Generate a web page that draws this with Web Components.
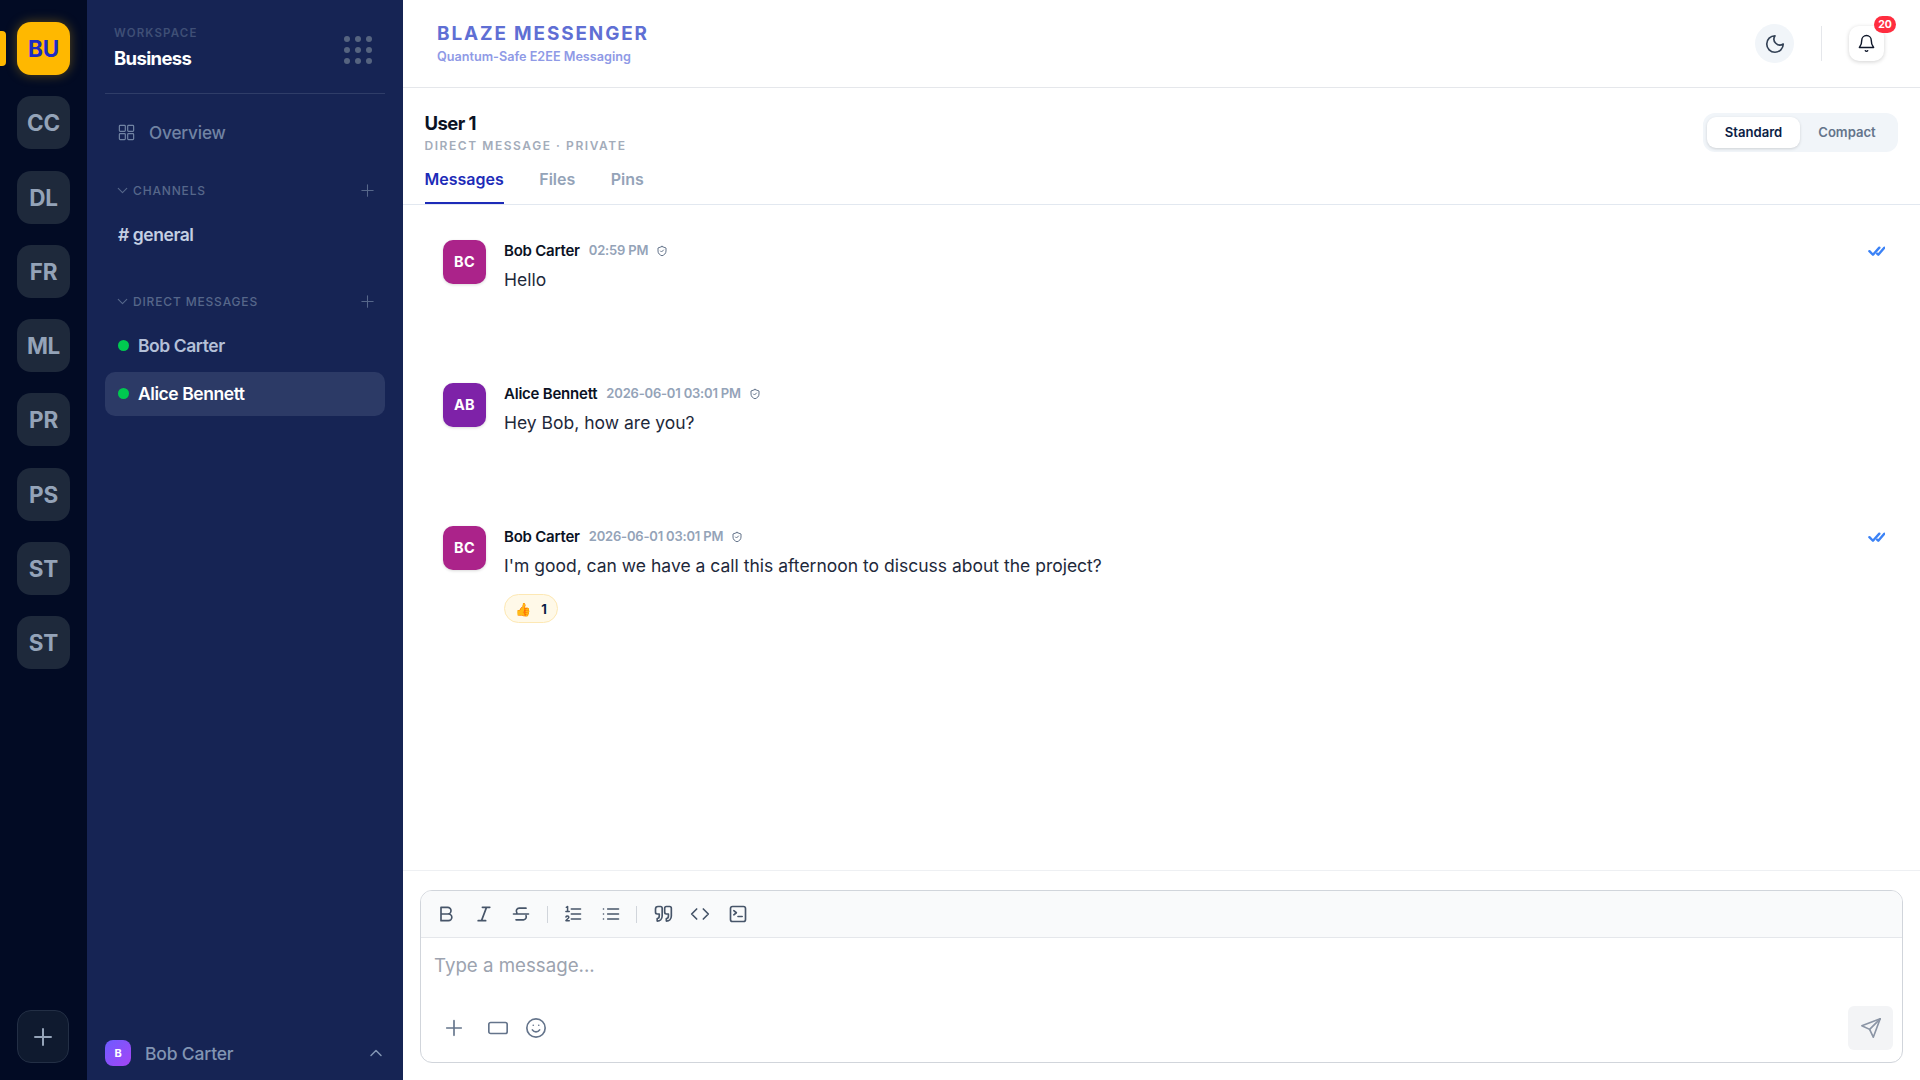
<!DOCTYPE html>
<html lang="en">
<head>
<meta charset="utf-8">
<title>Blaze Messenger</title>
<style>
  html, body { margin: 0; height: 100%; overflow: hidden; }
  body { font-family: "Inter", "Liberation Sans", sans-serif; }
</style>
</head>
<body>
<blaze-app></blaze-app>
<script>
// icon paths, 24x24 stroke icons
const ICONS = {
  grid: '<rect x="3" y="3" width="7.5" height="7.5" rx="1"/><rect x="13.5" y="3" width="7.5" height="7.5" rx="1"/><rect x="3" y="13.5" width="7.5" height="7.5" rx="1"/><rect x="13.5" y="13.5" width="7.5" height="7.5" rx="1"/>',
  plus: '<path d="M12 4v16M4 12h16"/>',
  down: '<path d="M6 9l6 6 6-6"/>',
  up: '<path d="M6 15l6-6 6 6"/>',
  moon: '<path d="M12 3a6.5 6.5 0 0 0 9 9 9 9 0 1 1-9-9Z"/>',
  bell: '<path d="M6 8a6 6 0 0 1 12 0c0 7 3 8 3 9H3c0-1 3-2 3-9"/><path d="M10.5 21a1.7 1.7 0 0 0 3 0"/>',
  shield: '<path d="M12 3l8 3v6c0 5-3.5 8-8 9.5C7.5 20 4 17 4 12V6l8-3Z"/><path d="M9 12l2 2 4-4"/>',
  checks: '<path d="M2 13l5 5 9-10"/><path d="M13 16.5l1.5 1.5L23 8"/>',
  bold: '<path d="M6 4h8a4 4 0 0 1 0 8H6zM6 12h9a4 4 0 0 1 0 8H6z"/>',
  italic: '<path d="M10 4h9M5 20h9M15 4L9 20"/>',
  strike: '<path d="M18 5H10a3.5 3.5 0 0 0-3 5.5M3 12h18M6 19h9a3.5 3.5 0 0 0 3-5"/>',
  ol: '<path d="M10 6h11M10 12h11M10 18h11"/><path d="M4 4l1.5-1v6M3.5 9h4" stroke-width="1.8"/><path d="M3.5 15.5c.5-1.5 3.5-1.5 3.5.3 0 1.4-2.5 2.4-3.5 4.2h4" stroke-width="1.8"/>',
  ul: '<path d="M8 6h13M8 12h13M8 18h13M3 6h.01M3 12h.01M3 18h.01"/>',
  quote: '<path d="M9 3H6a3 3 0 0 0-3 3v4a2 2 0 0 0 2 2h2.5v2.5c0 2-1 3-2.5 3v3c3.5 0 6-2.5 6-6V5a2 2 0 0 0-2-2Z"/><path d="M19 3h-3a2 2 0 0 0-2 2v5a2 2 0 0 0 2 2h2.5v2.5c0 2-1 3-2.5 3v3c3.5 0 6-2.5 6-6V5a2 2 0 0 0-2-2Z"/>',
  code: '<path d="M8 6l-6 6 6 6M16 6l6 6-6 6"/>',
  terminal: '<rect x="3" y="3" width="18" height="18" rx="2.5"/><path d="M7 8l3 2.5L7 13M12 15h5"/>',
  rect: '<rect x="2" y="6" width="20" height="12" rx="2"/>',
  smile: '<circle cx="12" cy="12" r="10"/><path d="M8 14c1 1.5 2.5 2.2 4 2.2s3-.7 4-2.2M9 9h.01M15 9h.01"/>',
  send: '<path d="M22 2L2 9.5l8.5 4L14.5 22 22 2Z"/><path d="M10.5 13.5L22 2"/>',
};

function icon(name, size, stroke = 2) {
  return `<svg width="${size}" height="${size}" viewBox="0 0 24 24" fill="none" stroke="currentColor" stroke-width="${stroke}" stroke-linecap="round" stroke-linejoin="round" style="display:block;flex-shrink:0">${ICONS[name]}</svg>`;
}

class BaseElement extends HTMLElement {
  connectedCallback() {
    if (!this.shadowRoot) this.attachShadow({ mode: 'open' });
    this.render();
  }
}

// <rail-button label="BU" active>
class RailButton extends BaseElement {
  render() {
    const active = this.hasAttribute('active');
    this.shadowRoot.innerHTML = `
      <style>
        :host { display: block; position: relative; width: 87px; height: 53px; }
        .btn {
          margin-left: 17px; width: 53px; height: 53px; box-sizing: border-box;
          border-radius: 14px; display: flex; align-items: center; justify-content: center;
          font-size: 22.5px; font-weight: 700; letter-spacing: -0.01em;
          background: ${active ? '#ffb800' : '#1e293b'};
          color: ${active ? '#1d2bc4' : '#94a3b8'};
          ${active ? 'box-shadow: 0 0 12px rgba(255,184,0,.35);' : ''}
        }
        .mark { position: absolute; left: 0; top: 9px; width: 6px; height: 35px; background: #ffb800; border-radius: 0 4px 4px 0; }
      </style>
      ${active ? '<div class="mark"></div>' : ''}
      <div class="btn">${this.getAttribute('label')}</div>
    `;
  }
}

class WorkspaceRail extends BaseElement {
  render() {
    const labels = ['CC', 'DL', 'FR', 'ML', 'PR', 'PS', 'ST', 'ST'];
    this.shadowRoot.innerHTML = `
      <style>
        :host { display: flex; flex-direction: column; width: 87px; height: 100%; background: #020b24; padding-top: 22px; box-sizing: border-box; flex-shrink: 0; }
        .list { flex: 1; display: flex; flex-direction: column; gap: 21.3px; }
        .add {
          margin: 0 0 17px 17px; width: 52px; height: 53px; box-sizing: border-box;
          border: 1px solid #232f45; border-radius: 14px; background: #0f1a2f; color: #94a3b8;
          display: flex; align-items: center; justify-content: center;
        }
      </style>
      <div class="list">
        <rail-button label="BU" active></rail-button>
        ${labels.map((l) => `<rail-button label="${l}"></rail-button>`).join('')}
      </div>
      <div class="add">${icon('plus', 24, 2)}</div>
    `;
  }
}

// <section-label>CHANNELS</section-label>
class SectionLabel extends BaseElement {
  render() {
    this.shadowRoot.innerHTML = `
      <style>
        :host { display: flex; align-items: center; height: 20px; padding: 0 9px 0 9px; color: #56678a; font-size: 12px; font-weight: 500; letter-spacing: .07em; }
        .label { flex: 1; margin-left: 2px; }
      </style>
      ${icon('down', 17, 1.6)}
      <span class="label"><slot></slot></span>
      ${icon('plus', 17, 1.5)}
    `;
  }
}

// <dm-row active>Alice Bennett</dm-row>
class DmRow extends BaseElement {
  render() {
    const active = this.hasAttribute('active');
    this.shadowRoot.innerHTML = `
      <style>
        :host { display: flex; align-items: center; height: 44px; box-sizing: border-box; padding: 0 0 1px 13px; border-radius: 10px; gap: 9px;
          font-size: 17.5px; font-weight: 600; letter-spacing: -0.025em;
          color: ${active ? '#ffffff' : '#b4c0d8'}; background: ${active ? '#2c3a66' : 'transparent'}; }
        .dot { width: 11px; height: 11px; border-radius: 50%; background: #00c950; }
      </style>
      <span class="dot"></span><slot></slot>
    `;
  }
}

class ChannelSidebar extends BaseElement {
  render() {
    const dots = Array.from({ length: 9 }, () => '<i></i>').join('');
    this.shadowRoot.innerHTML = `
      <style>
        :host { display: flex; flex-direction: column; width: 316px; height: 100%; background: #162454; padding: 0 18px; box-sizing: border-box; flex-shrink: 0; }
        .head { height: 94px; box-sizing: border-box; border-bottom: 1px solid #2f3d68; display: flex; align-items: center; justify-content: space-between; padding: 2px 13px 0 9px; }
        .ws { font-size: 11.5px; font-weight: 600; letter-spacing: .1em; color: #3f4f76; }
        .name { font-size: 18.5px; font-weight: 700; letter-spacing: -0.035em; color: #fff; margin-top: 7px; }
        .dots { display: grid; grid-template-columns: repeat(3, 6px); gap: 5px; margin-top: 4px; }
        .dots i { width: 6px; height: 6px; border-radius: 50%; background: #566480; }
        .overview { display: flex; align-items: center; gap: 14px; height: 40px; margin-top: 18.5px; padding-left: 12px; color: #7183a3; font-size: 17.2px; font-weight: 500; letter-spacing: -0.01em; }
        .channels { margin-top: 28px; }
        .general { height: 44px; display: flex; align-items: center; padding-left: 13px; margin-top: 12px; color: #c4cfe2; font-size: 17.5px; font-weight: 600; letter-spacing: -0.025em; }
        .dms { margin-top: 34.5px; }
        .dm-list { margin-top: 13px; display: flex; flex-direction: column; gap: 4.4px; }
        .spacer { flex: 1; }
        .me { height: 54px; display: flex; align-items: center; gap: 14px; margin-right: -1px; color: #8295b3; font-size: 17.5px; font-weight: 500; letter-spacing: -0.01em; }
        .me .av { width: 26px; height: 26px; border-radius: 8px; background: linear-gradient(135deg, #6d5cff, #a545f5); color: #fff; font-size: 11px; font-weight: 700; display: flex; align-items: center; justify-content: center; }
        .me .who { flex: 1; }
      </style>
      <div class="head">
        <div><div class="ws">WORKSPACE</div><div class="name">Business</div></div>
        <div class="dots">${dots}</div>
      </div>
      <div class="overview">${icon('grid', 19, 1.5)}<span style="margin-left:-1px">Overview</span></div>
      <section-label class="channels">CHANNELS</section-label>
      <div class="general"># general</div>
      <section-label class="dms">DIRECT MESSAGES</section-label>
      <div class="dm-list">
        <dm-row>Bob Carter</dm-row>
        <dm-row active>Alice Bennett</dm-row>
      </div>
      <div class="spacer"></div>
      <div class="me"><span class="av">B</span><span class="who">Bob Carter</span>${icon('up', 20, 1.8)}</div>
    `;
  }
}

class AppHeader extends BaseElement {
  render() {
    this.shadowRoot.innerHTML = `
      <style>
        :host { display: flex; align-items: center; height: 88px; box-sizing: border-box; border-bottom: 1px solid #e5e7eb; padding: 0 24px 0 34px; flex-shrink: 0; background: #fff; }
        .brand { flex: 1; padding-bottom: 1px; }
        .title { font-size: 18.9px; font-weight: 700; letter-spacing: .1em; color: #5f6fd4; }
        .sub { font-size: 12.65px; font-weight: 600; color: #8f9ae6; margin-top: 4.5px; }
        .theme { width: 39px; height: 39px; border-radius: 50%; background: #f1f5f9; color: #334155; display: flex; align-items: center; justify-content: center; }
        .sep { width: 1px; height: 35px; background: #e5e7eb; margin: 0 27px; }
        .bell { position: relative; width: 35px; height: 35px; border-radius: 10px; background: #fff; box-shadow: 0 1px 4px rgba(0,0,0,.18); color: #0f172a; display: flex; align-items: center; justify-content: center; margin-right: 12px; }
        .badge { position: absolute; right: -12px; top: -10px; min-width: 22px; height: 17px; border-radius: 9px; background: #ff2d3f; color: #fff; font-size: 10.5px; font-weight: 700; display: flex; align-items: center; justify-content: center; }
      </style>
      <div class="brand">
        <div class="title">BLAZE MESSENGER</div>
        <div class="sub">Quantum-Safe E2EE Messaging</div>
      </div>
      <div class="theme">${icon('moon', 22, 1.8)}</div>
      <div class="sep"></div>
      <div class="bell">${icon('bell', 19, 1.8)}<span class="badge">20</span></div>
    `;
  }
}

class ConversationHeader extends BaseElement {
  render() {
    this.shadowRoot.innerHTML = `
      <style>
        :host { display: flex; height: 117px; box-sizing: border-box; border-bottom: 1px solid #e2e8f0; padding: 0 22px 0 21.5px; flex-shrink: 0; background: #fff; }
        .left { flex: 1; padding-top: 23.5px; }
        .name { font-size: 18.5px; font-weight: 700; letter-spacing: -0.03em; color: #0b1224; line-height: 22px; }
        .sub { font-size: 12px; font-weight: 600; letter-spacing: .13em; color: #a3acba; margin-top: 5.5px; line-height: 14px; }
        .tabs { display: flex; gap: 35.5px; margin-top: 16px; }
        .tab { font-size: 16px; font-weight: 600; color: #94a3b8; height: 35px; box-sizing: border-box; line-height: 20px; }
        .tab.on { color: #1d2bb8; border-bottom: 2px solid #1d2bb8; }
        .toggle { align-self: flex-start; margin-top: 24.5px; display: flex; padding: 4px; background: #f1f5f9; border-radius: 12px; height: 39px; box-sizing: border-box; width: 195px; }
        .opt { flex: 1; display: flex; align-items: center; justify-content: center; font-size: 13.1px; font-weight: 600; color: #64748b; border-radius: 9px; }
        .opt.on { flex: 0 0 93px; background: #fff; color: #0b1d45; box-shadow: 0 1px 3px rgba(0,0,0,.15); }
      </style>
      <div class="left">
        <div class="name">User 1</div>
        <div class="sub">DIRECT MESSAGE · PRIVATE</div>
        <div class="tabs"><div class="tab on">Messages</div><div class="tab">Files</div><div class="tab">Pins</div></div>
      </div>
      <div class="toggle"><div class="opt on">Standard</div><div class="opt">Compact</div></div>
    `;
  }
}

// <message-item initials="BC" color="#ab238a" author="Bob Carter" time="02:59 PM" text="Hello" read>
class MessageItem extends BaseElement {
  render() {
    const read = this.hasAttribute('read');
    this.shadowRoot.innerHTML = `
      <style>
        :host { display: flex; min-height: 143px; box-sizing: border-box; padding-left: 40px; padding-right: 34px; }
        .av { width: 43px; height: 44px; padding-bottom: 1px; box-sizing: border-box; border-radius: 10px; background: ${this.getAttribute('color')}; color: #fff; font-size: 14.5px; font-weight: 700; letter-spacing: .02em; display: flex; align-items: center; justify-content: center; box-shadow: 0 1px 3px rgba(0,0,0,.15); flex-shrink: 0; }
        .body { flex: 1; margin-left: 18px; }
        .meta { display: flex; align-items: center; height: 20px; }
        .author { font-size: 15px; font-weight: 600; letter-spacing: -0.015em; color: #0b1224; }
        .time { font-size: 13px; font-weight: 600; letter-spacing: -0.015em; color: #94a3b8; margin-left: 9px; }
        .shield { color: #64748b; margin-left: 8px; margin-top: 1px; }
        .checks { color: #3b82f6; margin-top: 2px; margin-right: 1px; }
        .text { font-size: 17.5px; color: #1e293b; line-height: 24px; margin-top: 8px; }
        ::slotted(reaction-pill) { margin-top: 16px; }
      </style>
      <div class="av">${this.getAttribute('initials')}</div>
      <div class="body">
        <div class="meta">
          <span class="author">${this.getAttribute('author')}</span>
          <span class="time">${this.getAttribute('time')}</span>
          <span class="shield">${icon('shield', 12, 2)}</span>
        </div>
        <div class="text">${this.getAttribute('text')}</div>
        <slot></slot>
      </div>
      ${read ? `<div class="checks">${icon('checks', 17, 3.4)}</div>` : ''}
    `;
  }
}

class ReactionPill extends BaseElement {
  render() {
    this.shadowRoot.innerHTML = `
      <style>
        :host { display: inline-flex; align-items: center; justify-content: center; gap: 10px; width: 54px; height: 29px; box-sizing: border-box; border: 1px solid #fde8b4; border-radius: 15px; background: #fff9e8; font-size: 13px; font-weight: 700; color: #0b1d45; }
        .emoji { font-size: 13px; filter: hue-rotate(-16deg) saturate(1.3); }
      </style>
      <span class="emoji">👍</span><span>1</span>
    `;
  }
}

class ComposerBox extends BaseElement {
  render() {
    const tool = (n) => `<span class="tool">${icon(n, 20, 2)}</span>`;
    this.shadowRoot.innerHTML = `
      <style>
        :host { display: block; padding: 19px 17px 17px 17px; border-top: 1px solid #eef0f3; flex-shrink: 0; background: #fff; }
        .box { border: 1px solid #d1d5db; border-radius: 12px; height: 173px; box-sizing: border-box; display: flex; flex-direction: column; overflow: hidden; }
        .bar { height: 47px; box-sizing: border-box; background: #f9fafb; border-bottom: 1px solid #e5e7eb; display: flex; align-items: center; padding-left: 6.5px; color: #475569; }
        .tool { width: 37.5px; display: flex; justify-content: center; }
        .sep { width: 1px; height: 17px; background: #d1d5db; margin: 0 6.8px; }
        .input { padding: 14px 13px 0; font-size: 18.7px; color: #9ca3af; line-height: 27px; flex: 1; }
        .foot { display: flex; align-items: center; padding: 0 9px 12px 22px; color: #64748b; }
        .gap-wide { margin-right: 22px; }
        .gap { margin-right: 16px; }
        .send { margin-left: auto; width: 45px; height: 44px; background: #f3f4f6; border-radius: 6px; color: #8b95a5; display: flex; align-items: center; justify-content: center; }
      </style>
      <div class="box">
        <div class="bar">
          ${tool('bold')}${tool('italic')}${tool('strike')}<span class="sep"></span>
          ${tool('ol')}${tool('ul')}<span class="sep"></span>
          ${tool('quote')}${tool('code')}${tool('terminal')}
        </div>
        <div class="input">Type a message...</div>
        <div class="foot">
          <span class="gap-wide">${icon('plus', 22, 1.8)}</span>
          <span class="gap">${icon('rect', 22, 1.8)}</span>
          <span>${icon('smile', 22, 1.8)}</span>
          <span class="send">${icon('send', 22, 1.8)}</span>
        </div>
      </div>
    `;
  }
}

class ChatMain extends BaseElement {
  render() {
    this.shadowRoot.innerHTML = `
      <style>
        :host { display: flex; flex-direction: column; flex: 1; min-width: 0; height: 100%; background: #fff; }
        .list { flex: 1; padding-top: 35px; overflow: hidden; }
      </style>
      <app-header></app-header>
      <conversation-header></conversation-header>
      <div class="list">
        <message-item initials="BC" color="#ab238a" author="Bob Carter" time="02:59 PM" text="Hello" read></message-item>
        <message-item initials="AB" color="#7e22a8" author="Alice Bennett" time="2026-06-01 03:01 PM" text="Hey Bob, how are you?"></message-item>
        <message-item initials="BC" color="#ab238a" author="Bob Carter" time="2026-06-01 03:01 PM" text="I'm good, can we have a call this afternoon to discuss about the project?" read>
          <reaction-pill></reaction-pill>
        </message-item>
      </div>
      <composer-box></composer-box>
    `;
  }
}

class BlazeApp extends BaseElement {
  render() {
    this.shadowRoot.innerHTML = `
      <style>
        :host { display: flex; width: 100%; height: 100vh; font-family: "Inter", "Liberation Sans", sans-serif; }
      </style>
      <workspace-rail></workspace-rail>
      <channel-sidebar></channel-sidebar>
      <chat-main></chat-main>
    `;
  }
}

customElements.define('rail-button', RailButton);
customElements.define('workspace-rail', WorkspaceRail);
customElements.define('section-label', SectionLabel);
customElements.define('dm-row', DmRow);
customElements.define('channel-sidebar', ChannelSidebar);
customElements.define('app-header', AppHeader);
customElements.define('conversation-header', ConversationHeader);
customElements.define('reaction-pill', ReactionPill);
customElements.define('message-item', MessageItem);
customElements.define('composer-box', ComposerBox);
customElements.define('chat-main', ChatMain);
customElements.define('blaze-app', BlazeApp);
</script>
</body>
</html>
